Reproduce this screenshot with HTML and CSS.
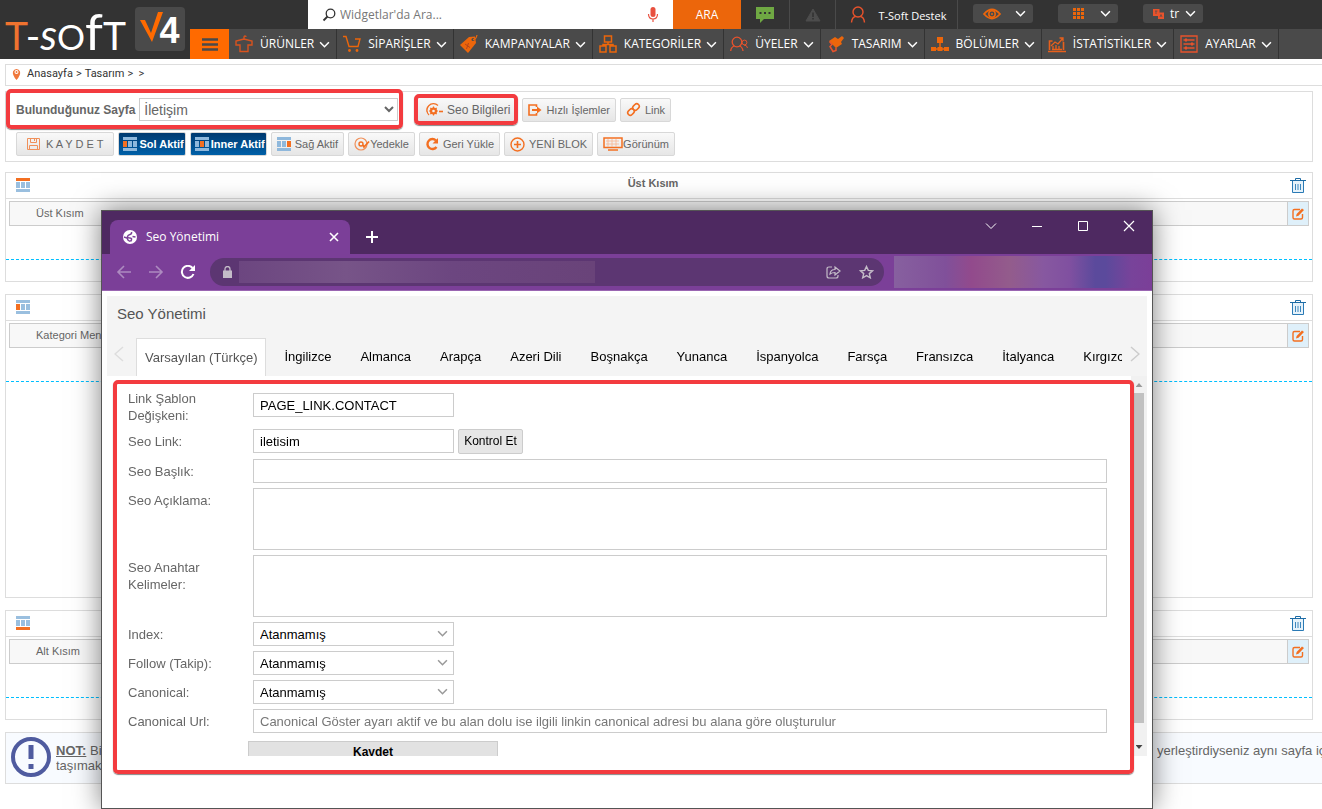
FILE: index.html
```html
<!DOCTYPE html>
<html lang="tr">
<head>
<meta charset="utf-8">
<title>T-Soft V4 - Tasarım</title>
<link rel="stylesheet" href="styles.css">
</head>
<body>
<svg class="sprite" aria-hidden="true">
  <symbol id="chev" viewBox="0 0 10 10"><path d="M1 3l4 4 4-4" fill="none" stroke="currentColor" stroke-width="1.4"/></symbol>
  <symbol id="trash" viewBox="0 0 16 16"><path d="M2.500 4v11.500h11V4" fill="#e6f2fa" stroke="#2a7ab5"/><path d="M0 3.500h16M5.500 3V1.500h5V3" fill="none" stroke="#1c6ba5"/><path d="M5.500 7v6M8 7v6M10.500 7v6" fill="none" stroke="#2a7ab5" stroke-width=".9"/></symbol>
  <symbol id="edit" viewBox="0 0 14 14"><path d="M9 2.500H3.500q-1.500 0-1.500 1.500v6.500q0 1.500 1.500 1.500H10q1.500 0 1.500-1.500V7" fill="none" stroke="#f36f21" stroke-width="1.400"/><path d="M5 9.500l.6-2.500L11 1.500 13 3 7.500 8.800z" fill="#f36f21"/></symbol>
</svg>

<header class="header">
  <div class="logo">
    <span class="logo-word"><span class="logo-t">T</span>-<i>s</i><span>O</span><b>f</b>T</span>
    <span class="logo-mark"><svg width="24" height="32" viewBox="0 0 24 32"><path d="M0 9h5l6 13L18 1h5L12 31z" fill="#ff6a00"/></svg><span class="logo-4">4</span></span>
  </div>
  <div class="header-main">
    <div class="topbar">
      <form class="search">
        <svg width="14" height="14" viewBox="0 0 14 14"><circle cx="8.500" cy="5.500" r="4.300" fill="none" stroke="#333" stroke-width="1.300"/><path d="M5.500 8.500L1.500 12.500" stroke="#333" stroke-width="1.800"/></svg>
        <input type="text" placeholder="Widgetlar'da Ara..." aria-label="Widgetlar'da Ara">
        <svg width="12" height="16" viewBox="0 0 12 16"><rect x="3.500" y="0" width="5" height="10" rx="2.500" fill="#e8503f"/><path d="M1.500 7q0 5 4.500 5t4.500-5M6 12v3" fill="none" stroke="#e8503f" stroke-width="1.200"/></svg>
        <button class="ara" type="button">ARA</button>
      </form>
      <a class="top-item chat" href="#" aria-label="Mesajlar"><svg width="18" height="16" viewBox="0 0 18 16"><path d="M0 0h18v12H8l-4 4v-4H0z" fill="#6fa843"/><path d="M3.500 5h2v2h-2zM8 5h2v2H8zM12.500 5h2v2h-2z" fill="#333"/></svg></a>
      <a class="top-item warn" href="#" aria-label="Uyarılar"><svg width="16" height="14" viewBox="0 0 16 14"><path d="M8 1l7 12H1z" fill="#4d4d4d" stroke="#4d4d4d"/><path d="M8 4.500v4.500M8 10v1.500" stroke="#333" stroke-width="1.600"/></svg></a>
      <a class="top-item support" href="#"><svg width="16" height="18" viewBox="0 0 16 18"><circle cx="8" cy="6" r="5" fill="none" stroke="#e8532c" stroke-width="1.400"/><path d="M5.500 10.500Q2 11 1.500 16.500M10.500 10.500Q14 11 14.500 16.500" fill="none" stroke="#e8532c" stroke-width="1.400"/></svg><span>T-Soft Destek</span></a>
      <div class="quick">
        <button type="button" aria-label="Görünüm"><svg width="18" height="12" viewBox="0 0 18 12"><path d="M1 6q8-9 16 0q-8 9-16 0z" fill="none" stroke="#ec660b" stroke-width="1.800"/><circle cx="9" cy="6" r="3.200" fill="none" stroke="#ec660b" stroke-width="1.500"/><circle cx="9" cy="6" r="1" fill="#ec660b"/></svg><svg class="chev"><use href="#chev"/></svg></button>
        <button type="button" aria-label="Uygulamalar"><svg width="11" height="11" viewBox="0 0 11 11"><path d="M0 0h3v3H0zM4 0h3v3H4zM8 0h3v3H8zM0 4h3v3H0zM4 4h3v3H4zM8 4h3v3H8zM0 8h3v3H0zM4 8h3v3H4zM8 8h3v3H8z" fill="#ec660b"/></svg><svg class="chev"><use href="#chev"/></svg></button>
        <button type="button"><svg width="11" height="10" viewBox="0 0 11 10"><rect width="6.500" height="7" fill="#e8532c"/><rect x="5" y="3.500" width="6" height="6.500" fill="#e8532c"/><path d="M2 2h2.500M3 2v3M7 8l1-2.500 1 2.500" stroke="#4a4a4a" stroke-width=".7" fill="none"/></svg><span>tr</span><svg class="chev"><use href="#chev"/></svg></button>
      </div>
    </div>
    <nav class="nav">
      <button class="burger" type="button" aria-label="Menü"><svg width="16" height="13" viewBox="0 0 16 13"><path d="M0 1.500h16M0 6.500h16M0 11.500h16" stroke="#4a4a4a" stroke-width="2.400"/></svg></button>
      <a href="#"><svg width="18" height="18" viewBox="0 0 18 18"><path d="M9 4V2.500q0-1.500 1-1.500t1 1M9 4L1 6v4h4v6.500h8V10h4V6z" fill="none" stroke="#d9531e" stroke-width="1.400"/></svg>ÜRÜNLER<svg class="chev"><use href="#chev"/></svg></a>
      <a href="#"><svg width="18" height="18" viewBox="0 0 18 18"><path d="M0 1.500h3l3 10h9L17 4h-5" fill="none" stroke="#ec660b" stroke-width="1.400"/><circle cx="6.500" cy="15.500" r="1.400" fill="#ec660b"/><circle cx="14" cy="15.500" r="1.400" fill="#ec660b"/></svg>SİPARİŞLER<svg class="chev"><use href="#chev"/></svg></a>
      <a href="#"><svg width="18" height="18" viewBox="0 0 18 18"><path d="M0 10L9 2l6-.5 1 6.500-8 10z" fill="#ec660b"/><circle cx="13" cy="4.500" r="1.500" fill="#4a4a4a"/><path d="M13 4.500Q16 5 17 0" fill="none" stroke="#ec660b" stroke-width="1.200"/><path d="M5 9l5 3.500M8.500 8l-2 6" fill="none" stroke="#b5451a"/></svg>KAMPANYALAR<svg class="chev"><use href="#chev"/></svg></a>
      <a href="#"><svg width="18" height="18" viewBox="0 0 18 18"><path d="M5.500 1h7v6h-7zM1 11h6v6H1zM11 11h6v6h-6zM9 7v2.500M4 11V9.500h10V11" fill="none" stroke="#ec660b" stroke-width="1.500"/></svg>KATEGORİLER<svg class="chev"><use href="#chev"/></svg></a>
      <a href="#"><svg width="18" height="18" viewBox="0 0 18 18"><circle cx="7" cy="7" r="4.800" fill="none" stroke="#e8532c" stroke-width="1.300"/><path d="M4.500 11Q1 12 .7 16M9.500 11q3 1 3.500 5" fill="none" stroke="#e8532c" stroke-width="1.300"/><circle cx="14.500" cy="7.500" r="2.400" fill="none" stroke="#e8532c"/><path d="M14 10q3 0 3.500 3" fill="none" stroke="#e8532c"/></svg>ÜYELER<svg class="chev"><use href="#chev"/></svg></a>
      <a href="#"><svg width="18" height="18" viewBox="0 0 18 18"><path d="M2 6l6-4 3 2 4-3 2 2-3 4 1 2-6 4z" fill="#ec660b"/><path d="M2.500 6.500l2.500 3-2 2 3 5 3-1v-3" fill="none" stroke="#e8532c" stroke-width="1.500"/></svg>TASARIM<svg class="chev"><use href="#chev"/></svg></a>
      <a href="#"><svg width="18" height="18" viewBox="0 0 18 18"><path d="M6 2h6v6H6zM0 12h5v4H0zM6.500 12h5v4h-5zM13 12h5v4h-5z" fill="#ec660b"/><path d="M9 8v4M2.500 14h13" stroke="#ec660b" stroke-width="1.500"/></svg>BÖLÜMLER<svg class="chev"><use href="#chev"/></svg></a>
      <a href="#"><svg width="18" height="18" viewBox="0 0 18 18"><path d="M1.500 15V6h3M15.500 7v8M0 16.500h18" fill="none" stroke="#e8601c" stroke-width="1.600"/><path d="M3 11l4-4 3 2 5-6M11.500 3H15v3.500M4 14.500h10M5 14v-3M8 14v-4M11 14v-3" fill="none" stroke="#e8601c" stroke-width="1.300"/></svg>İSTATİSTİKLER<svg class="chev"><use href="#chev"/></svg></a>
      <a href="#"><svg width="18" height="18" viewBox="0 0 18 18"><path d="M1 1h16v16H1zM3.500 5h11M3.500 9h11M3.500 13h11" fill="none" stroke="#e8532c" stroke-width="1.300"/><path d="M5 3.500h2v3H5zM11 7.500h2v3h-2zM5 11.500h2v3H5z" fill="#e8532c"/></svg>AYARLAR<svg class="chev"><use href="#chev"/></svg></a>
    </nav>
  </div>
</header>

<main class="page">
  <div class="crumbs"><svg width="9" height="12" viewBox="0 0 9 12"><path d="M4.500 12Q0 7 1 3.500a3.700 3.700 0 0 1 7 0Q9 7 4.500 12z" fill="#f0773a"/><circle cx="4.500" cy="4" r="2" fill="#fff"/><circle cx="4.500" cy="4" r="1" fill="#f0773a"/></svg><a href="#">Anasayfa</a> &gt; <a href="#">Tasarım</a> &gt;&nbsp; &gt;</div>

  <section class="tools">
    <div class="tool-row first">
      <div class="page-pick">
        <label for="sayfa">Bulunduğunuz Sayfa</label>
        <select id="sayfa"><option>İletişim</option></select>
      </div>
      <div class="seo-mark"><button class="btn seo" type="button"><svg width="17" height="14" viewBox="0 0 17 14"><path d="M3 12A6 6 0 0 1 12 2.500M1 9Q0 4 4 2" fill="none" stroke="#f36f21" stroke-width="1.200"/><circle cx="7.500" cy="8" r="2.600" fill="none" stroke="#f36f21" stroke-width="2"/><path d="M7.500 3.500v9M3 8h9M4.300 4.800l6.400 6.400M10.700 4.800l-6.400 6.400" stroke="#f36f21" stroke-width="1.200"/><circle cx="7.500" cy="8" r="1.300" fill="#f2f2f2"/><path d="M13 8.500h4" stroke="#f36f21" stroke-width="1.600"/></svg>Seo Bilgileri</button></div>
      <button class="btn" type="button"><svg width="14" height="12" viewBox="0 0 14 12"><path d="M8.500 3V1H1v10h7.500V9" fill="none" stroke="#f36f21" stroke-width="1.600"/><path d="M4 5h5V2.500L13.500 6 9 9.500V7H4z" fill="#f36f21"/></svg>Hızlı İşlemler</button>
      <button class="btn" type="button"><svg width="15" height="15" viewBox="0 0 15 15"><g fill="none" stroke="#f36f21" stroke-width="1.600"><rect x="7.500" y="1.500" width="5" height="7" rx="2.500" transform="rotate(45 10 5)"/><rect x="2.500" y="6.500" width="5" height="7" rx="2.500" transform="rotate(45 5 10)"/></g></svg>Link</button>
    </div>
    <div class="tool-row">
      <button class="btn save" type="button"><svg width="13" height="12" viewBox="0 0 13 12"><path d="M.5.5h12v11H.5zM3.500 .5v4h6v-4M2.500 11.500v-4h8v4M7.500 1v2" fill="none" stroke="#f0905a"/></svg>K A Y D E T</button>
      <button class="btn on" type="button"><svg class="lay" viewBox="0 0 14 14"><path d="M0 0h14v3H0zM0 11h14v3H0zM5 4h4v6H5zM10 4h4v6h-4z" fill="#8fb8dc"/><path d="M0 4h4v6H0z" fill="#f36f21"/></svg>Sol Aktif</button>
      <button class="btn on" type="button"><svg class="lay" viewBox="0 0 14 14"><path d="M0 0h14v3H0zM0 11h14v3H0zM0 4h4v6H0zM10 4h4v6h-4z" fill="#8fb8dc"/><path d="M5 4h4v6H5z" fill="#f36f21"/></svg>Inner Aktif</button>
      <button class="btn" type="button"><svg class="lay" viewBox="0 0 14 14"><path d="M0 0h14v3H0zM0 11h14v3H0zM0 4h4v6H0zM5 4h4v6H5z" fill="#8fb8dc"/><path d="M10 4h4v6h-4z" fill="#f36f21"/></svg>Sağ Aktif</button>
      <button class="btn tight" type="button"><svg width="16" height="14" viewBox="0 0 16 14"><circle cx="7" cy="7" r="6" fill="none" stroke="#f0905a" stroke-width="1.200"/><circle cx="7" cy="7" r="2" fill="none" stroke="#f36f21" stroke-width="1.400"/><path d="M15 4.500L10 10l-1-2" fill="none" stroke="#f36f21" stroke-width="1.800"/></svg>Yedekle</button>
      <button class="btn" type="button"><svg width="14" height="14" viewBox="0 0 14 14"><path d="M11 3.500A5 5 0 1 0 11.500 10" fill="none" stroke="#f36f21" stroke-width="2.400"/><path d="M13 1v5.500H7.500z" fill="#f36f21"/></svg>Geri Yükle</button>
      <button class="btn" type="button"><svg width="15" height="15" viewBox="0 0 15 15"><circle cx="7.500" cy="7.500" r="6.500" fill="none" stroke="#f36f21" stroke-width="1.400"/><path d="M7.500 4v7M4 7.500h7" stroke="#f36f21" stroke-width="1.600"/></svg>YENİ BLOK</button>
      <button class="btn tight" type="button"><svg width="20" height="14" viewBox="0 0 20 14"><path d="M1 1h18v9.500H1z" fill="none" stroke="#f36f21" stroke-width="1.500"/><path d="M5 2v8M9 2v8M13 2v8M3 4h13M3 7h13" stroke="#f7b48f" stroke-width=".8"/><path d="M5 13h10" stroke="#f36f21" stroke-width="1.500"/></svg>Görünüm</button>
    </div>
  </section>

  <section class="zone">
    <header class="zone-head"><svg class="lay" viewBox="0 0 14 14"><path d="M0 11h14v3H0zM0 4h4v6H0zM5 4h4v6H5zM10 4h4v6h-4z" fill="#9abfdf"/><path d="M0 0h14v3H0z" fill="#f36f21"/></svg><h2>Üst Kısım</h2><button type="button" aria-label="Sil"><svg width="16" height="16"><use href="#trash"/></svg></button></header>
    <div class="block"><span>Üst Kısım</span><button type="button" aria-label="Düzenle"><svg width="14" height="14"><use href="#edit"/></svg></button></div>
    <div class="drop"></div>
  </section>

  <section class="zone tall">
    <header class="zone-head"><svg class="lay" viewBox="0 0 14 14"><path d="M0 0h14v3H0zM0 11h14v3H0zM5 4h4v6H5zM10 4h4v6h-4z" fill="#9abfdf"/><path d="M0 4h4v6H0z" fill="#f36f21"/></svg><h2></h2><button type="button" aria-label="Sil"><svg width="16" height="16"><use href="#trash"/></svg></button></header>
    <div class="block"><span>Kategori Menü</span><button type="button" aria-label="Düzenle"><svg width="14" height="14"><use href="#edit"/></svg></button></div>
    <div class="drop"></div>
  </section>

  <section class="zone">
    <header class="zone-head"><svg class="lay" viewBox="0 0 14 14"><path d="M0 0h14v3H0zM0 4h4v6H0zM5 4h4v6H5zM10 4h4v6h-4z" fill="#9abfdf"/><path d="M0 11h14v3H0z" fill="#f36f21"/></svg><h2></h2><button type="button" aria-label="Sil"><svg width="16" height="16"><use href="#trash"/></svg></button></header>
    <div class="block"><span>Alt Kısım</span><button type="button" aria-label="Düzenle"><svg width="14" height="14"><use href="#edit"/></svg></button></div>
    <div class="drop"></div>
  </section>

  <aside class="note">
    <svg width="40" height="40" viewBox="0 0 40 40"><circle cx="20" cy="20" r="18" fill="none" stroke="#4f5b9f" stroke-width="4"/><path d="M20 8v14M20 27v5" stroke="#4f5b9f" stroke-width="5"/></svg>
    <p><u><b>NOT:</b></u> Bir</p>
    <p class="note-end">yerleştirdiyseniz aynı sayfa için</p>
    <p class="note-next">taşımak</p>
  </aside>
</main>

<div class="window" role="dialog" aria-label="Seo Yönetimi">
  <div class="titlebar">
    <div class="wtab">
      <svg width="14" height="14" viewBox="0 0 14 14"><circle cx="7" cy="7" r="7" fill="#fff"/><path d="M8.500 2q.5 2-1.500 2.500T4.500 6.500 7 8t.5 3.500M1 7l3 1 1 2 2 1.500M12.500 7l-3-.5" fill="none" stroke="#7b3f98" stroke-width="1.500"/></svg>
      <span>Seo Yönetimi</span>
      <button type="button" aria-label="Sekmeyi kapat"><svg width="10" height="10" viewBox="0 0 10 10"><path d="M1 1l8 8M9 1L1 9" stroke="#fff" stroke-width="1.600"/></svg></button>
    </div>
    <button class="plus" type="button" aria-label="Yeni sekme"><svg width="12" height="12" viewBox="0 0 12 12"><path d="M6 0v12M0 6h12" stroke="#fff" stroke-width="2"/></svg></button>
    <div class="wctl">
      <button type="button" aria-label="Sekme ara"><svg width="12" height="12" viewBox="0 0 12 12"><path d="M1 3.500l5 5 5-5" fill="none" stroke="#fff"/></svg></button>
      <button type="button" aria-label="Simge durumu"><svg width="12" height="12" viewBox="0 0 12 12"><path d="M1 6.500h10" stroke="#fff"/></svg></button>
      <button type="button" aria-label="Ekranı kapla"><svg width="12" height="12" viewBox="0 0 12 12"><path d="M1.500 1.500h9v9h-9z" fill="none" stroke="#fff"/></svg></button>
      <button type="button" aria-label="Kapat"><svg width="12" height="12" viewBox="0 0 12 12"><path d="M1 1l10 10M11 1L1 11" stroke="#fff" stroke-width="1.200"/></svg></button>
    </div>
  </div>
  <div class="addressbar">
    <svg width="16" height="14" viewBox="0 0 16 14"><path d="M15 7H2M8 1L2 7l6 6" fill="none" stroke="#ad8bc0" stroke-width="1.600"/></svg>
    <svg width="16" height="14" viewBox="0 0 16 14"><path d="M1 7h13M8 1l6 6-6 6" fill="none" stroke="#ad8bc0" stroke-width="1.600"/></svg>
    <svg width="16" height="14" viewBox="0 0 16 14"><path d="M12.500 3A6 6 0 1 0 13.500 9" fill="none" stroke="#fff" stroke-width="2"/><path d="M15 0v6H9z" fill="#fff"/></svg>
    <div class="url">
      <svg width="9" height="12" viewBox="0 0 9 12"><path d="M0 4.500h9V12H0z" fill="#c4bcc8"/><path d="M2 5V3a2.500 2.500 0 0 1 5 0v2" fill="none" stroke="#c4bcc8" stroke-width="1.300"/></svg>
      <span class="url-text"></span>
      <svg width="15" height="14" viewBox="0 0 15 14"><path d="M6 2H3Q1 2 1 4v7q0 2 2 2h7q2 0 2-2v-1M4 9q.5-4.500 5-4.500V2l5 4-5 4V7.500Q6 7.500 4 9z" fill="none" stroke="#c4bcc8" stroke-width="1.200"/></svg>
      <svg width="15" height="14" viewBox="0 0 15 14"><path d="M7.500 1.500l1.800 3.900 4.200.4-3.200 2.800 1 4.200-3.800-2.200-3.800 2.200 1-4.200L1.500 5.800l4.200-.4z" fill="none" stroke="#c4bcc8" stroke-width="1.400"/></svg>
    </div>
    <div class="exts"></div>
  </div>

  <div class="dialog">
    <div class="dialog-head">
      <h1>Seo Yönetimi</h1>
      <div class="tabs">
        <button class="scroll" type="button" aria-label="Önceki"><svg width="10" height="16" viewBox="0 0 10 16"><path d="M9 1L1 8l8 7" fill="none" stroke="#ddd" stroke-width="1.500"/></svg></button>
        <div class="tablist">
          <a class="active" href="#">Varsayılan (Türkçe)</a><a href="#">İngilizce</a><a href="#">Almanca</a><a href="#">Arapça</a><a href="#">Azeri Dili</a><a href="#">Boşnakça</a><a href="#">Yunanca</a><a href="#">İspanyolca</a><a href="#">Farsça</a><a href="#">Fransızca</a><a href="#">İtalyanca</a><a href="#">Kırgızca</a>
        </div>
        <button class="scroll" type="button" aria-label="Sonraki"><svg width="10" height="16" viewBox="0 0 10 16"><path d="M1 1l8 7-8 7" fill="none" stroke="#ccc" stroke-width="1.500"/></svg></button>
      </div>
    </div>
    <div class="dialog-body">
      <form class="seo-form">
        <label class="two" for="sablon">Link Şablon Değişkeni:</label><div><input class="short" id="sablon" type="text" value="PAGE_LINK.CONTACT"></div>
        <label for="link">Seo Link:</label><div class="pair"><input class="short" id="link" type="text" value="iletisim"><button class="check" type="button">Kontrol Et</button></div>
        <label for="baslik">Seo Başlık:</label><input id="baslik" type="text">
        <label for="aciklama">Seo Açıklama:</label><textarea id="aciklama"></textarea>
        <label class="two" for="anahtar">Seo Anahtar Kelimeler:</label><textarea id="anahtar"></textarea>
        <label for="index">Index:</label><div class="sel"><select class="short" id="index"><option>Atanmamış</option></select><svg class="chev"><use href="#chev"/></svg></div>
        <label for="follow">Follow (Takip):</label><div class="sel"><select class="short" id="follow"><option>Atanmamış</option></select><svg class="chev"><use href="#chev"/></svg></div>
        <label for="canon">Canonical:</label><div class="sel"><select class="short" id="canon"><option>Atanmamış</option></select><svg class="chev"><use href="#chev"/></svg></div>
        <label for="canonurl">Canonical Url:</label><input id="canonurl" type="text" placeholder="Canonical Göster ayarı aktif ve bu alan dolu ise ilgili linkin canonical adresi bu alana göre oluşturulur">
        <button class="submit" type="button">Kaydet</button>
      </form>
      <div class="bar"><i class="up"></i><span></span><i class="down"></i></div>
    </div>
    <div class="form-mark"></div>
  </div>
</div>
</body>
</html>
```
FILE: styles.css
```css
* { box-sizing: border-box; }
html, body { height: 100%; }
body { margin: 0; overflow: hidden; background: #fff; color: #666; font: 11px/14px "Liberation Sans", Arial, sans-serif; }
a { color: inherit; text-decoration: none; }
button { font: inherit; color: inherit; padding: 0; border: 0; background: none; }
input, select, textarea { font: inherit; }
svg { display: block; flex: none; }
h1, h2, p { margin: 0; }
.sprite { position: absolute; width: 0; height: 0; }
.chev { width: 11px; height: 11px; }

/* header */
.header { display: flex; height: 59px; background: #333; color: #fff; font-family: "Open Sans", "Noto Sans", sans-serif; }
.logo { display: flex; justify-content: space-between; width: 190px; flex: none; padding: 7px 5px 0; }
.logo-word { font: 39px/48px Lato, sans-serif; white-space: nowrap; }
.logo-word i { font-size: 42px; }
.logo-word span { font-size: 35px; }
.logo-word b { font-weight: 400; font-size: 51px; }
.logo-word .logo-t { color: #f0732f; font-size: 39px; }
.logo-mark { width: 50px; height: 44px; flex: none; border-radius: 4px; background: #4a4a4a; display: flex; justify-content: center; padding-top: 4px; font: bold 36px/40px "Liberation Sans", sans-serif; }
.logo-4 { margin-left: -5px; }
.header-main { flex: 1; min-width: 0; display: flex; flex-direction: column; }
.topbar { display: flex; height: 29px; padding-left: 118px; font-size: 12px; }
.search { display: flex; align-items: center; width: 433px; height: 29px; padding-left: 14px; gap: 4px; background: #fff; box-shadow: 0 2px #bbb; }
.search input { flex: 1; min-width: 0; border: 0; outline: 0; padding: 0; font-size: 12px; color: #666; }
.search input::placeholder { color: #777; }
.ara { width: 68px; height: 29px; margin-left: 10px; background: #ec660b; color: #fff; font-size: 12px; box-shadow: 0 2px #4a4a4a; }
.top-item { display: flex; align-items: center; justify-content: center; border-right: 1px solid #4a4a4a; }
.chat { width: 49px; }
.warn { width: 46px; }
.support { width: 122px; gap: 12px; padding-left: 4px; }
.support span { padding-top: 2px; font-size: 11px; }
.quick { display: flex; gap: 25px; padding: 4px 0 0 15px; }
.quick button { display: flex; align-items: center; justify-content: space-between; width: 60px; height: 19px; padding: 0 7px 0 10px; border-radius: 3px; background: #4a4a4a; }
.quick button:nth-child(2) { padding-left: 15px; }
.nav { display: flex; height: 30px; background: #4a4a4a; font-size: 12px; white-space: nowrap; }
.burger { width: 39px; display: flex; align-items: center; justify-content: center; background: #ff6a00; flex: none; }
.nav a { display: flex; align-items: center; padding: 0 6px; border-right: 1px solid #333; }
.nav a svg:first-child { margin-right: 7px; }
.nav .chev { margin-left: 5px; }

/* page */
.page { padding: 5px 0 0 5px; }
.crumbs { display: flex; gap: 3px; align-items: center; height: 22px; padding: 0 0 2px 6px; border: 1px solid #ddd; border-right: 0; font: 11px/14px Roboto, sans-serif; color: #333; }
.crumbs svg { margin-right: 3px; }
.tools { margin: 5px 9px 0 0; height: 71px; border: 1px solid #ddd; padding: 5px 0 0 10px; }
.tool-row { display: flex; align-items: center; gap: 4px; margin-top: 10px; }
.tool-row.first { margin-top: 0; }
.page-pick { position: relative; display: flex; align-items: center; width: 382px; height: 25px; gap: 4px; font-size: 12px; }
.page-pick::after, .seo-mark::after, .form-mark { content: ""; position: absolute; border: 4px solid #f33b3f; border-radius: 5px; box-shadow: 0 1px 1px #888; pointer-events: none; }
.page-pick::after { inset: -8px -5px -7px -10px; }
.page-pick label { font-weight: bold; white-space: nowrap; }
.page-pick select { flex: 1; min-width: 0; height: 23px; border: 1px solid #ccc; background: #fff; color: #666; font-size: 14px; padding: 0; }
.seo-mark { position: relative; margin: 0 2px 0 15px; }
.seo-mark::after { inset: -3px -2px -3px -3px; }
.btn { display: flex; align-items: center; gap: 4px; height: 24px; padding: 0 5px; border: 1px solid #d8d8d8; border-radius: 2px; background: linear-gradient(#f9f9f9, #e6e6e6); white-space: nowrap; }
.btn.seo { height: 25px; padding: 0 5px 0 8px; font-size: 12px; }
.btn.save { gap: 6px; padding: 0 10px; }
.btn.tight { gap: 0; }
.btn.on { background: linear-gradient(#003a70, #0060a8); color: #fff; font-weight: bold; gap: 2px; padding: 0 1px 0 4px; }
.lay { width: 14px; height: 14px; }
.zone { margin: 10px 9px 0 0; height: 110px; border: 1px solid #ddd; }
.zone + .zone { margin-top: 12px; }
.zone.tall { height: 304px; }
.zone-head { display: flex; align-items: center; height: 26px; padding: 0 6px 2px 10px; border-bottom: 1px solid #ddd; }
.zone-head h2 { flex: 1; padding-right: 14px; text-align: center; font-size: 11px; margin-top: -4px; }
.block { display: flex; height: 25px; margin: 2px 3px 0; border: 1px solid #ccc; background: #f8f8f8; justify-content: space-between; padding-left: 26px; line-height: 23px; }
.block button { width: 21px; padding-left: 3px; border-left: 1px solid #ccc; background: #dff0fa; }
.drop { height: 34px; border-bottom: 1px dashed #00bfff; }
.note { display: grid; grid-template: 21px 24px / 45px 1101px 1fr; margin-top: 12px; height: 52px; padding: 4px 0 0 5px; border: 1px solid #ddd; border-right: 0; background: #f8fbff; font-size: 13px; line-height: 15px; white-space: nowrap; overflow: hidden; }
.note svg { grid-row: span 2; }
.note p { margin-top: 6px; overflow: hidden; }
.note .note-next { margin-top: 0; grid-column: 2; }

/* browser window */
.window { position: fixed; inset: 210px 169px 0 101px; display: flex; flex-direction: column; border: 1px solid #555; background: #fff; box-shadow: 0 0 26px rgba(0, 0, 0, .5); }
.titlebar { display: flex; flex: none; height: 43px; padding: 9px 0 0 8px; background: #4e2961; color: #fff; }
.wtab { display: flex; align-items: center; gap: 9px; width: 240px; padding: 0 11px 0 13px; border-radius: 8px 8px 0 0; background: #7b3f98; font: 12px/14px "Open Sans", sans-serif; }
.wtab span { flex: 1; }
.plus { align-self: center; margin-left: 16px; }
.wctl { display: flex; gap: 34px; margin: 0 17px 0 auto; align-self: flex-start; }
.addressbar { display: flex; flex: none; align-items: center; height: 37px; gap: 16px; padding-left: 14px; background: #7b3f98; border-bottom: 1px solid #9a66b2; }
.url { display: flex; align-items: center; flex: 1; height: 28px; margin-left: -2px; padding: 0 10px 0 13px; gap: 18px; border-radius: 14px; background: #5c3672; }
.url-text { width: 356px; height: 22px; margin: 0 auto 0 -11px; background: linear-gradient(90deg, #6c4680, #775488 30%, #6c4680 60%, #694379); }
.exts { width: 258px; height: 32px; margin-left: -6px; background: linear-gradient(90deg, #87609f, #80509a 20%, #924a8c 30%, #935c8c 45%, #8758a0 58%, #8050a0 68%, #5b4a9c 78%, #5b4a9c 82%, #78439a 92%, #7b3f98); }
.dialog { position: relative; flex: 1; min-height: 0; padding: 5px 5px 52px; font-size: 13px; display: flex; flex-direction: column; }
.dialog-head { flex: none; background: #f4f4f4; }
.dialog-head h1 { padding: 9px 10px 16px; font-size: 15px; line-height: 17px; font-weight: 400; color: #555; }
.tabs { display: flex; height: 38px; padding: 0 7px; align-items: flex-start; }
.scroll { width: 10px; margin: 8px 0 0; }
.tablist { display: flex; flex: 1; min-width: 0; gap: 1px; overflow: hidden; margin: 0 8px 0 12px; color: #000; white-space: nowrap; line-height: 37px; }
.tablist a { padding: 0 14px; }
.tablist .active { height: 38px; margin-right: 3px; padding: 0 8px; border: 1px solid #ddd; border-bottom: 0; background: #fff; color: #555; }
.dialog-body { display: flex; flex: 1; min-height: 0; overflow: hidden; }
.seo-form { flex: 1; display: grid; grid-template-columns: 120px 1fr; gap: 5px; align-content: start; padding: 17px 24px 0 21px; color: #666; line-height: 17px; }
.seo-form label { padding: 4px 0 0; }
.seo-form .two { padding: 0 30px 0 0; margin-top: -3px; height: 34px; }
.seo-form .two ~ .two { margin-top: 4px; }
.seo-form input, .seo-form select, .seo-form textarea { display: block; width: 100%; height: 24px; margin: 0; padding: 0 6px; border: 1px solid #ccc; border-radius: 0; background: #fff; color: #000; outline: 0; }
.seo-form input::placeholder { color: #777; }
.seo-form textarea { height: 62px; resize: none; }
.seo-form .short { width: 201px; }
.seo-form select { appearance: none; }
.pair { display: flex; gap: 4px; }
.check { width: 65px; height: 25px; border: 1px solid #ccc; border-radius: 2px; background: #e6e6e6; color: #000; font-size: 12px; }
.sel { position: relative; width: 201px; color: #999; }
.sel .chev { position: absolute; right: 6px; top: 6px; pointer-events: none; }
.submit { grid-column: 1 / 3; width: 250px; height: 25px; margin: 3px 0 0 120px; padding-bottom: 3px; border: 1px solid #ccc; background: #e2e2e2; color: #000; font-size: 12px; font-weight: bold; line-height: 20px; }
.bar { display: flex; flex-direction: column; align-items: center; width: 16px; flex: none; background: #f1f1f1; }
.bar span { width: 12px; margin-left: -2px; height: 330px; background: #c1c1c1; }
.bar i { width: 7px; height: 4px; flex: none; }
.up { margin: 7px 0 6px; background: #999; clip-path: polygon(50% 0, 100% 100%, 0 100%); }
.down { margin-top: 22px; background: #444; clip-path: polygon(0 0, 100% 0, 50% 100%); }
.form-mark { inset: 89px 18px 34px 11px; }
```
